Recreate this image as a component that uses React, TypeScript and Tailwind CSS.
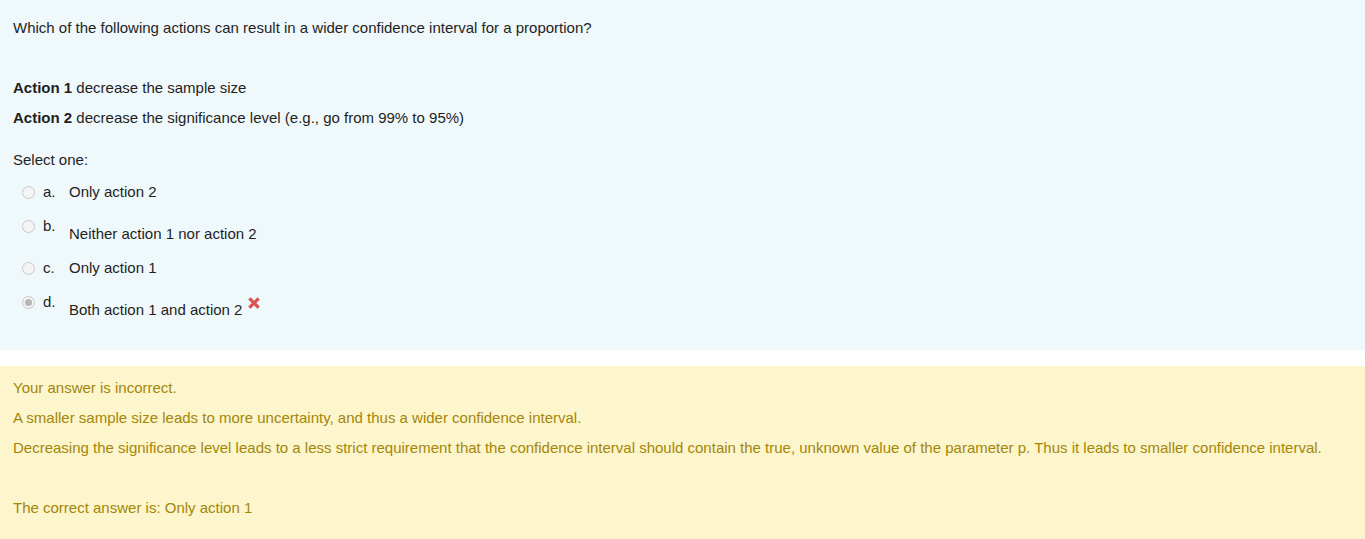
import { ReactNode } from 'react';

type Option = {
  letter: string;
  text: string;
  offset?: boolean;
  checked?: boolean;
  wrong?: boolean;
};

const options: Option[] = [
  { letter: 'a.', text: 'Only action 2' },
  { letter: 'b.', text: 'Neither action 1 nor action 2', offset: true },
  { letter: 'c.', text: 'Only action 1' },
  { letter: 'd.', text: 'Both action 1 and action 2', offset: true, checked: true, wrong: true },
];

const Radio = ({ checked }: { checked?: boolean }) => (
  <span className="mt-[4px] flex h-[13px] w-[13px] shrink-0 items-center justify-center rounded-full border border-[#c8c8c8] bg-[#f4f4f4]">
    {checked && <span className="h-[7px] w-[7px] rounded-full bg-[#b5b5b5]" />}
  </span>
);

const WrongIcon = () => (
  <svg width="12" height="12" viewBox="0 0 12 12" className="ml-[6px] mt-[-3px] shrink-0">
    <path d="M2.5 2.5 L9.5 9.5 M9.5 2.5 L2.5 9.5" stroke="#d9534f" strokeWidth="3.2" strokeLinecap="square" />
  </svg>
);

const Para = ({ children, className = '' }: { children: ReactNode; className?: string }) => (
  <p className={`leading-[20px] ${className}`}>{children}</p>
);

export default function App() {
  return (
    <div className="min-h-[539px] bg-white text-[15px] font-['Liberation_Sans',Arial,sans-serif]">
      {/* Question formulation */}
      <div className="bg-[#eff8fb] px-[13px] pt-[18px] pb-[30px] text-[#1f1f1f]">
        <Para>Which of the following actions can result in a wider confidence interval for a proportion?</Para>
        <Para className="mt-[40px]">
          <b>Action 1</b> decrease the sample size
        </Para>
        <Para className="mt-[10px]">
          <b>Action 2</b> decrease the significance level (e.g., go from 99% to 95%)
        </Para>
        <Para className="mt-[22px]">Select one:</Para>

        <div className="mt-[12px] flex flex-col gap-[14px]">
          {options.map((o) => (
            <div key={o.letter} className="flex items-start pl-[9px]">
              <Radio checked={o.checked} />
              <span className="ml-[8px] w-[26px] leading-[20px]">{o.letter}</span>
              <div className={`flex items-start leading-[20px] ${o.offset ? 'pt-[8px]' : ''}`}>
                <span>{o.text}</span>
                {o.wrong && <WrongIcon />}
              </div>
            </div>
          ))}
        </div>
      </div>

      {/* Feedback */}
      <div className="mt-[16px] min-h-[174px] bg-[#fdf5cc] px-[13px] pt-[12px] pb-[12px] text-[#a3870a]">
        <Para>Your answer is incorrect.</Para>
        <Para className="mt-[10px]">A smaller sample size leads to more uncertainty, and thus a wider confidence interval.</Para>
        <Para className="mt-[10px]">
          Decreasing the significance level leads to a less strict requirement that the confidence interval should contain the true, unknown value of the parameter p. Thus it leads to smaller confidence interval.
        </Para>
        <Para className="mt-[40px]">The correct answer is: Only action 1</Para>
      </div>
    </div>
  );
}
